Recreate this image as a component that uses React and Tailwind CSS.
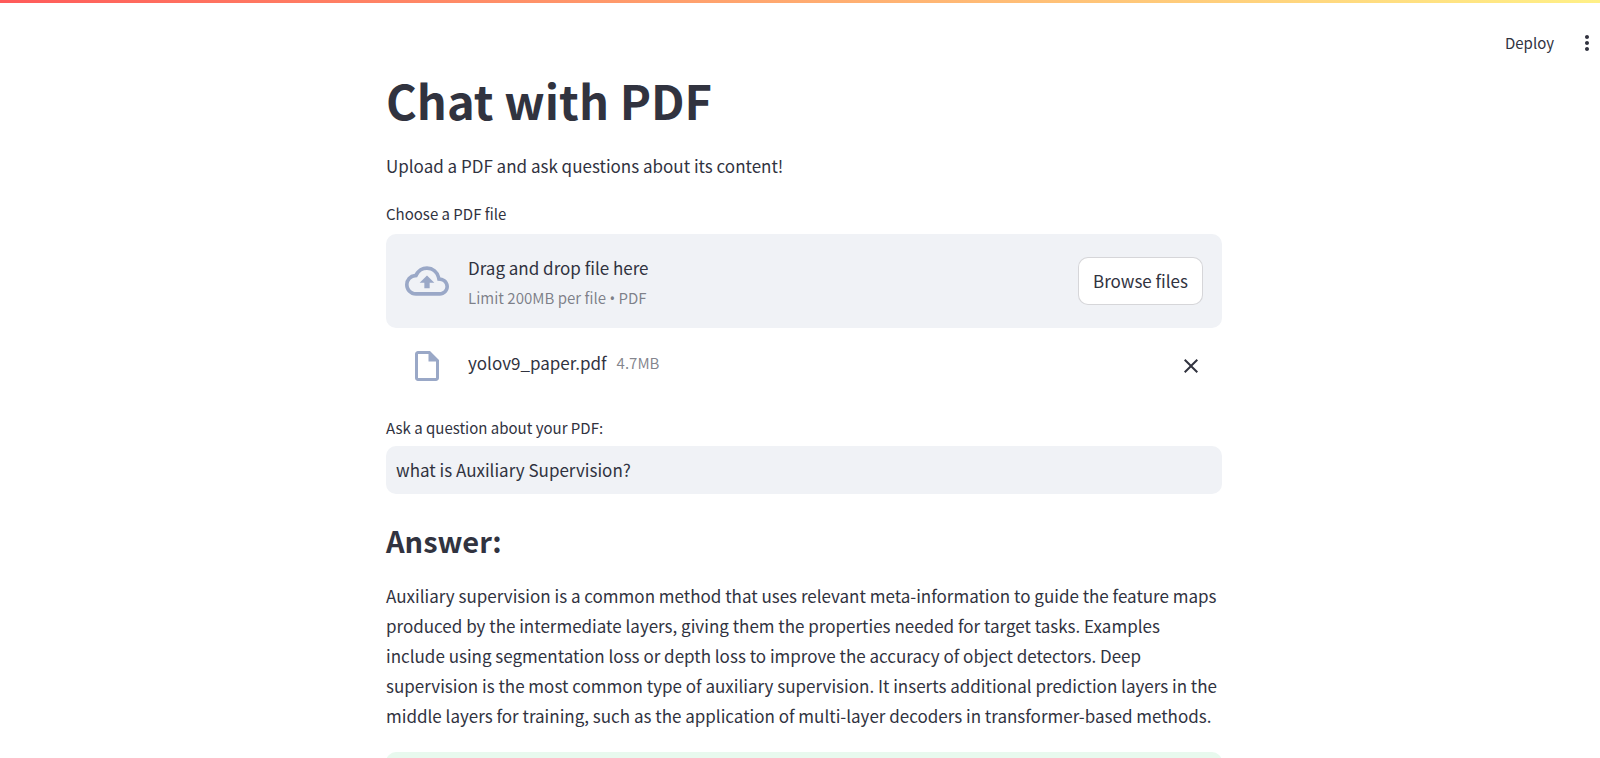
import { MdOutlineCloudUpload, MdMoreVert, MdClose, MdOutlineInsertDriveFile } from "react-icons/md";

function Header() {
  return (
    <header>
      <div className="h-[3px] bg-linear-to-r from-[#ff5a5a] to-[#fff087]" />
      <div className="flex h-[67px] items-center justify-end gap-[21px] pt-3 pr-px">
        <button type="button" className="text-[15px] leading-6">Deploy</button>
        <button type="button" aria-label="Main menu" className="flex w-6 justify-center">
          <MdMoreVert className="size-6" />
        </button>
      </div>
    </header>
  );
}

function FileUploader() {
  return (
    <section className="mt-[21px]">
      <label htmlFor="browse" className="block text-[15px] leading-6">Choose a PDF file</label>
      <div className="mt-2 flex items-center rounded-[10px] bg-[#f0f2f6] px-[19px] py-[15px]">
        <MdOutlineCloudUpload className="mr-[19px] size-11 shrink-0 text-[#9aa8c7]" />
        <div className="flex-1 pt-1 text-[17px] leading-[30px]">
          <p>Drag and drop file here</p>
          <p className="text-[15px] text-[#31333f]/60">
            Limit 200MB per file <span className="font-['Noto_Sans',sans-serif]">•</span> PDF
          </p>
        </div>
        <button
          id="browse"
          type="button"
          className="h-12 rounded-[10px] border border-[#31333f]/20 bg-white px-[14px] text-[17px] leading-[30px]"
        >
          Browse files
        </button>
      </div>
      <div className="mt-5 flex items-start pr-[19px] pl-[23px] leading-[30px]">
        <MdOutlineInsertDriveFile className="mr-[23px] size-9 shrink-0 text-[#9aa8c7]" />
        <p className="text-[17px]">yolov9_paper.pdf</p>
        <p className="ml-[10px] flex-1 text-[15px] text-[#31333f]/60">4.7MB</p>
        <button type="button" aria-label="Remove file" className="flex h-9 w-6 items-center justify-center">
          <MdClose className="size-6" />
        </button>
      </div>
    </section>
  );
}

export default function App() {
  return (
    <div className="h-screen overflow-hidden bg-white font-['Source_Sans_Pro','Noto_Sans_CJK_SC',sans-serif] text-[#31333f]">
      <Header />
      <main className="pl-2">
        <div className="mx-auto max-w-[836px]">
          <h1 className="text-[47px] leading-[60px] font-bold">Chat with PDF</h1>
          <p className="mt-[21px] text-[17px] leading-[30px]">Upload a PDF and ask questions about its content!</p>
          <FileUploader />
          <label htmlFor="question" className="mt-8 block text-[15px] leading-6">
            Ask a question about your PDF:
          </label>
          <input
            id="question"
            type="text"
            defaultValue="what is Auxiliary Supervision?"
            className="mt-1.5 block h-12 w-full rounded-[10px] bg-[#f0f2f6] px-[10px] pb-0.5 text-[17px] leading-[30px] outline-none"
          />
          <h2 className="mt-[26px] text-[29px] leading-10 font-semibold">Answer:</h2>
          <p className="mt-[21px] text-[17px] leading-[30px]">
            Auxiliary supervision is a common method that uses relevant meta-information to guide the feature maps
            produced by the intermediate layers, giving them the properties needed for target tasks. Examples include
            using segmentation loss or depth loss to improve the accuracy of object detectors. Deep supervision is the
            most common type of auxiliary supervision. It inserts additional prediction layers in the middle layers for
            training, such as the application of multi-layer decoders in transformer-based methods.
          </p>
          <div className="mt-[21px] h-16 rounded-[10px] bg-[#e8f9ee]" />
        </div>
      </main>
    </div>
  );
}
